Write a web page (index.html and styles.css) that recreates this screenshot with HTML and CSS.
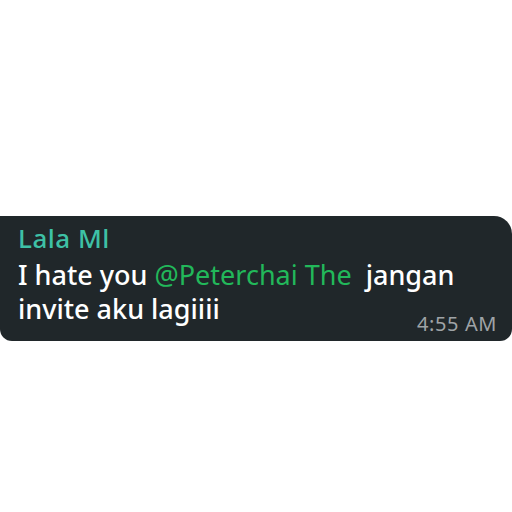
FILE: index.html
```html
<!DOCTYPE html>
<html lang="en">
<head>
    <meta charset="UTF-8">
    <meta name="viewport" content="width=device-width, initial-scale=1.0">
    <title>Chat message</title>
    <link rel="stylesheet" href="styles.css">
</head>
<body>
<div class="bubble">
    <div class="sender">Lala Ml</div>
    <div class="text">I hate you <span class="mention">@Peterchai The</span>&nbsp; jangan invite aku lagiiii<span class="time">4:55 AM</span></div>
</div>
</body>
</html>
```

FILE: styles.css
```css
body {
    margin: 0;
    background-color: white;
    font-family: "Noto Sans", sans-serif;
}
.bubble {
    margin-top: 216px;
    background-color: #20272a;
    border-radius: 0 18px 12px 12px;
    padding: 7px 15px 6px 18px;
}
.sender {
    color: #3ec1a6;
    font-size: 26px;
    line-height: 30px;
    font-weight: 500;
    letter-spacing: 0.5px;
}
.text {
    display: flow-root;
    margin-top: 5px;
    color: #ffffff;
    font-size: 27px;
    line-height: 34px;
    font-weight: 500;
}
.mention {
    color: #22b85a;
    font-weight: 400;
}
.time {
    float: right;
    margin-top: 21px;
    color: #9fa3a6;
    font-size: 20px;
    line-height: 22px;
    font-weight: 400;
    letter-spacing: 0.6px;
}
```
